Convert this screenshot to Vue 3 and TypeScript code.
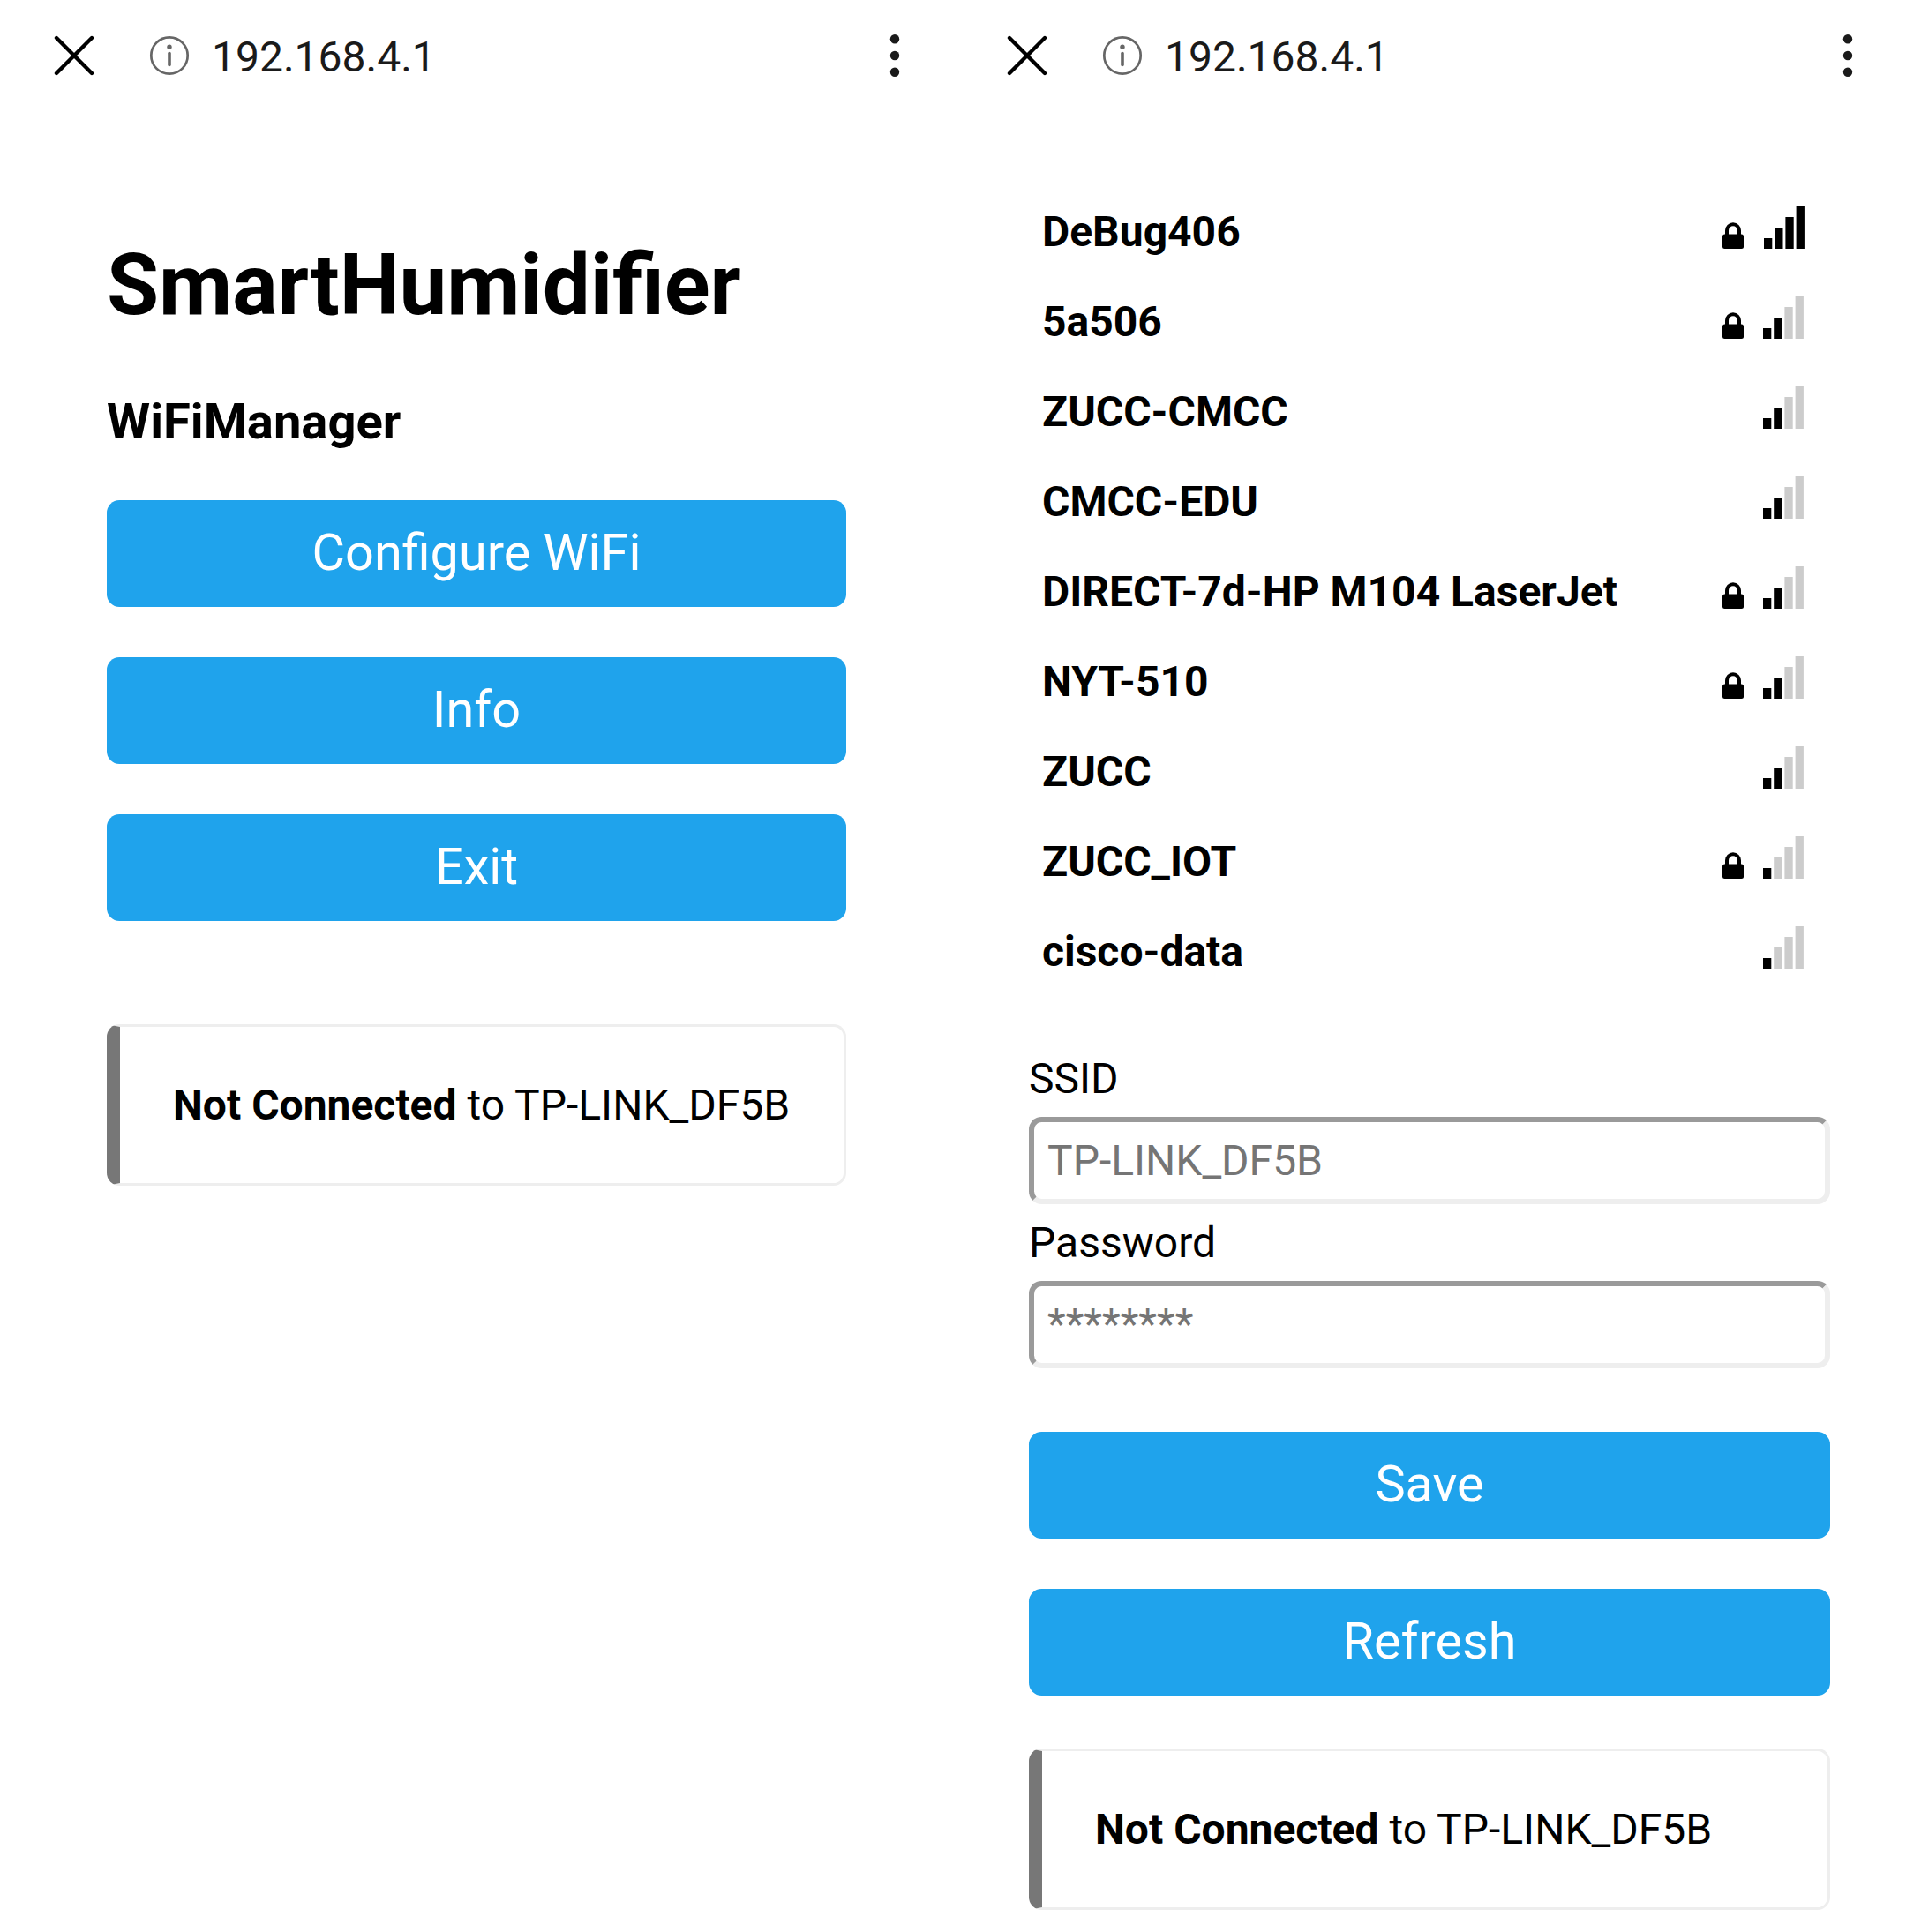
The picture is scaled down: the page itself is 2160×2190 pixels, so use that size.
<script setup lang="ts">
interface Network {
  name: string
  locked: boolean
  level: number
}

const address = '192.168.4.1'
const lastNetwork = 'TP-LINK_DF5B'
const actions: string[] = ['Configure WiFi', 'Info', 'Exit']
const formActions: string[] = ['Save', 'Refresh']

const networks: Network[] = [
  { name: 'DeBug406', locked: true, level: 4 },
  { name: '5a506', locked: true, level: 2 },
  { name: 'ZUCC-CMCC', locked: false, level: 2 },
  { name: 'CMCC-EDU', locked: false, level: 2 },
  { name: 'DIRECT-7d-HP M104 LaserJet', locked: true, level: 2 },
  { name: 'NYT-510', locked: true, level: 2 },
  { name: 'ZUCC', locked: false, level: 2 },
  { name: 'ZUCC_IOT', locked: true, level: 1 },
  { name: 'cisco-data', locked: false, level: 1 },
]
</script>

<template>
  <div class="screens">
    <section v-for="screen in 2" :key="screen" class="screen">
      <header class="bar">
        <svg class="close" viewBox="0 0 46 46">
          <path d="M3 3L43 43M43 3L3 43" fill="none" stroke="#000" stroke-width="4.4" stroke-linecap="round" />
        </svg>
        <svg class="info" viewBox="0 0 46 46">
          <circle cx="23" cy="23" r="20.7" fill="none" stroke="#666" stroke-width="2.7" />
          <circle cx="23" cy="13.3" r="2.7" fill="#666" />
          <path d="M23 20.5V33.5" stroke="#666" stroke-width="3.6" stroke-linecap="round" />
        </svg>
        <span class="address">{{ address }}</span>
        <svg class="more" viewBox="0 0 12 50">
          <circle v-for="cy in [6.2, 25, 43.8]" :key="cy" cx="6" :cy="cy" r="5.2" fill="#1a1a1a" />
        </svg>
      </header>

      <main v-if="screen === 1" class="home">
        <h1>SmartHumidifier</h1>
        <h3>WiFiManager</h3>
        <div class="buttons">
          <button v-for="label in actions" :key="label" type="button">{{ label }}</button>
        </div>
        <div class="msg"><strong>Not Connected</strong> to {{ lastNetwork }}</div>
      </main>

      <main v-else class="wifi">
        <ul class="networks">
          <li v-for="net in networks" :key="net.name">
            <a>{{ net.name }}</a>
            <svg v-if="net.locked" class="lock" viewBox="0 0 24 30">
              <path d="M5 16V9.3a7 7 0 0 1 14 0V16" fill="none" stroke="#000" stroke-width="4" />
              <rect x="0" y="13.5" width="24" height="16.5" rx="2.5" />
            </svg>
            <svg class="signal" :class="{ full: net.level === 4 }" viewBox="0 0 46 48">
              <rect
                v-for="n in 4"
                :key="n"
                :x="(n - 1) * 12.2"
                :y="48 - n * 12"
                width="9.3"
                :height="n * 12"
                :fill="n <= net.level ? '#000' : '#ccc'"
              />
            </svg>
          </li>
        </ul>
        <label for="ssid">SSID</label>
        <input id="ssid" type="text" :placeholder="lastNetwork" />
        <label for="pass">Password</label>
        <input id="pass" type="password" placeholder="********" />
        <div class="buttons">
          <button v-for="label in formActions" :key="label" type="button">{{ label }}</button>
        </div>
        <div class="msg"><strong>Not Connected</strong> to {{ lastNetwork }}</div>
      </main>
    </section>
  </div>
</template>

<style>
body {
  margin: 0;
  background: #fff;
}
</style>

<style scoped>
* {
  box-sizing: border-box;
}
.screens {
  display: flex;
  width: 2160px;
  height: 2190px;
  overflow: hidden;
  background: #fff;
  color: #000;
  font: 48px/60px Roboto, sans-serif;
}
.screen {
  width: 1080px;
}
.bar {
  display: flex;
  align-items: center;
  height: 126px;
  padding: 0 60px 0 61px;
}
.close {
  width: 46px;
  height: 46px;
}
.info {
  width: 46px;
  height: 46px;
  margin-left: 62px;
}
.address {
  margin-left: 25px;
  padding-top: 3px;
  color: #1a1a1a;
}
.more {
  width: 12px;
  height: 50px;
  margin-left: auto;
}
.home {
  width: 838px;
  margin-left: 121px;
  padding-top: 137px;
}
h1 {
  margin: 0;
  font-size: 96px;
  line-height: 120px;
  font-weight: 700;
}
h3 {
  margin: 59px 0 53px;
  font-size: 56.16px;
  line-height: 72px;
  font-weight: 700;
}
.buttons {
  display: flex;
  flex-direction: column;
  gap: 57px;
}
button {
  display: block;
  width: 100%;
  height: 121px;
  padding: 0 0 2px;
  border: 0;
  border-radius: 14.4px;
  background: #1fa3ec;
  color: #fff;
  font: 57.6px/115px Roboto, sans-serif;
}
.msg {
  height: 183px;
  padding: 59px 60px 57px;
  border: 3px solid #eee;
  border-left: 15px solid #777;
  border-radius: 14.4px;
}
.home .msg {
  margin-top: 117px;
}
.wifi {
  width: 908px;
  margin-left: 86px;
  padding-top: 86px;
}
.networks {
  margin: 0 0 63px;
  padding: 0;
  list-style: none;
}
li {
  display: flex;
  align-items: flex-start;
  height: 102px;
  padding: 20px 30px 0 15px;
  font-weight: 700;
}
li a {
  flex: 1;
  white-space: nowrap;
  line-height: 62px;
}
.lock {
  width: 24px;
  height: 30px;
  margin: 20px 22px 0 0;
}
.signal {
  width: 46px;
  height: 48px;
  margin-top: 2px;
}
.signal.full {
  position: relative;
  left: 1px;
}
label {
  display: block;
  height: 73px;
  line-height: 60px;
}
input {
  display: block;
  width: 100%;
  height: 99px;
  padding: 0 15px;
  margin: 0 0 14px;
  border: 6px solid;
  border-color: #9a9a9a #eee #eee #9a9a9a;
  border-radius: 14.4px;
  background: #fff;
  font: 48px/60px Roboto, sans-serif;
}
#pass {
  padding-bottom: 2px;
}
input::placeholder {
  color: #757575;
  opacity: 1;
}
.wifi .buttons {
  margin: 72px 0 60px;
}
</style>
